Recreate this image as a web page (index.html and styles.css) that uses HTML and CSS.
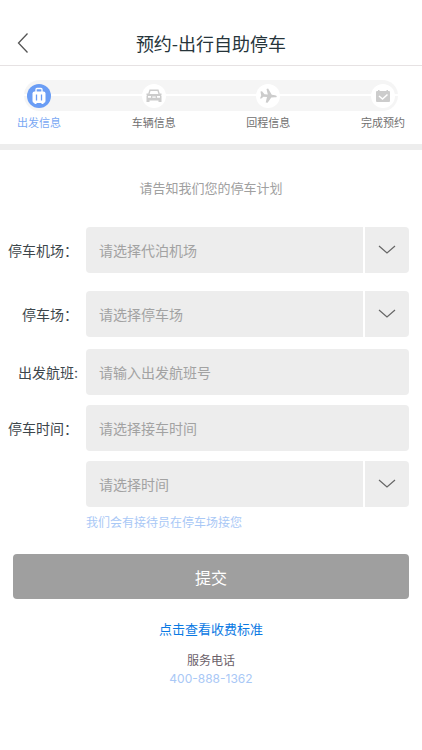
FILE: index.html
```html
<!DOCTYPE html>
<html lang="zh-CN">
<head>
<meta charset="utf-8">
<meta name="viewport" content="width=device-width, initial-scale=1">
<title>预约-出行自助停车</title>
<link rel="stylesheet" href="styles.css">
</head>
<body>
<header class="topbar">
  <button class="back" type="button" aria-label="返回">
    <svg width="12" height="22" viewBox="0 0 12 22"><path d="M10.500 1.500 1.500 11l9 9.500"/></svg>
  </button>
  <h1 class="title">预约-出行自助停车</h1>
</header>

<ol class="steps">
  <li class="step step-active">
    <span class="dot">
      <svg width="24" height="24" viewBox="0 0 24 24"><path class="line" d="M9 8V5.500q0-1 1-1h4q1 0 1 1V8"/><rect class="fill" x="5.500" y="7.500" width="13" height="11.500" rx="2"/><path class="fill" d="M7.500 18h2v2h-2zM14.500 18h2v2h-2z"/><path class="cut" d="M9.500 10.500v6M14.500 10.500v6"/></svg>
    </span>
    <span class="step-name">出发信息</span>
  </li>
  <li class="step">
    <span class="dot">
      <svg width="24" height="24" viewBox="0 0 24 24"><path class="outline" d="M6.700 10.500l1.300-4.300h8l1.300 4.300"/><path class="fill" fill-rule="evenodd" d="M4.500 9.500h1.700l.5.500h10.600l.5-.5h1.700v1.500h-.5l.5 1v6h-3v-1.500h-9V18h-3v-6l.5-1h-.5zM6 12v1.700h3V12zM15 12v1.700h3V12zM10.300 12.500v1.200h3.400v-1.200z"/></svg>
    </span>
    <span class="step-name">车辆信息</span>
  </li>
  <li class="step">
    <span class="dot">
      <svg width="24" height="24" viewBox="0 0 24 24"><path class="fill" d="M4.500 7.500l1.500-.2 2.500 3 3.300.2L10.500 5l1.600-.4 3.700 6.200 3.200.4q1.800.4 1.800 1.200t-1.800.9l-3.700.1-3.700 5.400-1.900-.2 1.300-5.600-3.500-.3-2.200 1.900-1.300-.2 1.200-2.900z"/></svg>
    </span>
    <span class="step-name">回程信息</span>
  </li>
  <li class="step">
    <span class="dot">
      <svg width="24" height="24" viewBox="0 0 24 24"><rect class="fill" x="5" y="7" width="14" height="11" rx="1"/><path class="fill" d="M7 6h1.500v2H7zM15.500 6H17v2h-1.500z"/><path class="tick" d="M8 12l3.500 3 5-4.500"/></svg>
    </span>
    <span class="step-name">完成预约</span>
  </li>
</ol>

<main class="content">
  <p class="intro">请告知我们您的停车计划</p>
  <form class="form">
    <div class="row row-wide">
      <label class="label" for="airport">停车机场：</label>
      <div class="field">
        <select class="control" id="airport"><option>请选择代泊机场</option></select>
        <span class="arrow"><svg width="18" height="10" viewBox="0 0 18 10"><path d="M1 1l8 7 8-7"/></svg></span>
      </div>
    </div>
    <div class="row row-medium">
      <label class="label" for="lot">停车场：</label>
      <div class="field">
        <select class="control" id="lot"><option>请选择停车场</option></select>
        <span class="arrow"><svg width="18" height="10" viewBox="0 0 18 10"><path d="M1 1l8 7 8-7"/></svg></span>
      </div>
    </div>
    <div class="row">
      <label class="label" for="flight">出发航班:</label>
      <div class="field"><input class="control" id="flight" type="text" placeholder="请输入出发航班号"></div>
    </div>
    <div class="row">
      <label class="label" for="date">停车时间：</label>
      <div class="field"><input class="control" id="date" type="text" placeholder="请选择接车时间"></div>
    </div>
    <div class="row row-last">
      <span class="label"></span>
      <div class="field">
        <select class="control" id="time" aria-label="时间"><option>请选择时间</option></select>
        <span class="arrow"><svg width="18" height="10" viewBox="0 0 18 10"><path d="M1 1l8 7 8-7"/></svg></span>
      </div>
    </div>
    <p class="hint">我们会有接待员在停车场接您</p>
    <button class="submit" type="submit">提交</button>
  </form>
  <footer class="footer">
    <a class="fees" href="#fees">点击查看收费标准</a>
    <span class="service">服务电话</span>
    <a class="phone" href="tel:400-888-1362">400-888-1362</a>
  </footer>
</main>
</body>
</html>
```
FILE: styles.css
```css
* {
  box-sizing: border-box;
}

body {
  margin: 0;
  background: #fff;
  color: #3d464b;
  font-family: Inter, "Noto Sans CJK SC", sans-serif;
  font-size: 14px;
}

svg {
  display: block;
  fill: none;
}

button,
input,
select {
  font: inherit;
}

h1,
p,
ol {
  margin: 0;
  padding: 0;
}

a {
  text-decoration: none;
}

.topbar {
  display: grid;
  grid-template-columns: 48px 1fr 48px;
  align-items: center;
  height: 66px;
  padding-top: 21px;
  border-bottom: 1px solid #e6e2e3;
}

.back {
  padding: 0 0 0 17px;
  border: 0;
  background: none;
}

.back path {
  stroke: #555;
  stroke-width: 1.3;
}

.title {
  color: #26343a;
  font-family: "Noto Sans CJK SC", sans-serif;
  font-size: 18px;
  font-weight: 400;
  line-height: 24px;
  text-align: center;
}

.steps {
  position: relative;
  display: flex;
  justify-content: space-between;
  padding: 14px 15px 12px;
  border-bottom: 6px solid #ededed;
  list-style: none;
}

.steps::before {
  content: "";
  position: absolute;
  top: 14px;
  right: 24px;
  left: 24px;
  height: 31px;
  border-radius: 16px;
  background: linear-gradient(#f5f5f5 14px, #fff 14px, #fff 16px, #f5f5f5 16px);
}

.step {
  position: relative;
  display: flex;
  flex-direction: column;
  align-items: center;
  width: 48px;
}

.dot {
  margin: 4px 0 6px;
  border-radius: 50%;
  background: #fff;
}

.dot .fill {
  fill: #ccc;
}

.dot .outline {
  stroke: #ccc;
  stroke-width: 1.4;
}

.dot .tick {
  stroke: #fff;
  stroke-width: 1.5;
}

.step-active .dot {
  background: #6a9df5;
}

.step-active .fill {
  fill: #fff;
}

.step-active .line {
  stroke: #fff;
  stroke-width: 1.3;
}

.step-active .cut {
  stroke: #6a9df5;
  stroke-width: 1.3;
}

.step-name {
  color: #707070;
  font-size: 11px;
  line-height: 18px;
  white-space: nowrap;
}

.step-active .step-name {
  color: #79a8f4;
}

.content {
  padding: 28px 13px 0;
}

.intro {
  color: #a0a0a0;
  font-size: 13px;
  line-height: 20px;
  text-align: center;
}

.form {
  margin-top: 29px;
}

.row {
  display: flex;
  align-items: center;
  margin-bottom: 10px;
}

.row-wide {
  margin-bottom: 18px;
}

.row-medium {
  margin-bottom: 12px;
}

.row-last {
  margin-bottom: 6px;
}

.label {
  display: flex;
  justify-content: flex-end;
  width: 73px;
  padding-right: 8px;
  white-space: nowrap;
}

.field {
  position: relative;
  flex: 1;
}

.control {
  display: block;
  width: 100%;
  height: 46px;
  padding: 0 13px;
  border: 0;
  border-radius: 4px;
  background: #ededed;
  color: #a2a2a2;
  appearance: none;
}

.control::placeholder {
  color: #a2a2a2;
}

.arrow {
  position: absolute;
  top: 0;
  right: 0;
  display: flex;
  align-items: center;
  justify-content: center;
  width: 46px;
  height: 100%;
  border-left: 2px solid #fff;
  pointer-events: none;
}

.arrow path {
  stroke: #666;
  stroke-width: 1.2;
}

.hint {
  margin-left: 73px;
  color: #a9c8f6;
  font-size: 12px;
  line-height: 20px;
}

.submit {
  display: block;
  width: 100%;
  height: 45px;
  margin-top: 21px;
  padding: 0;
  border: 0;
  border-radius: 4px;
  background: #9f9f9f;
  color: #fff;
  font-size: 16px;
}

.footer {
  display: flex;
  flex-direction: column;
  align-items: center;
  padding-top: 20px;
}

.fees {
  margin-bottom: 12px;
  color: #0b79e3;
  font-size: 13px;
  line-height: 20px;
}

.service {
  color: #6b5f6a;
  font-size: 12px;
  line-height: 20px;
}

.phone {
  color: #a9c8f6;
  font-size: 12px;
  line-height: 16px;
}
```
